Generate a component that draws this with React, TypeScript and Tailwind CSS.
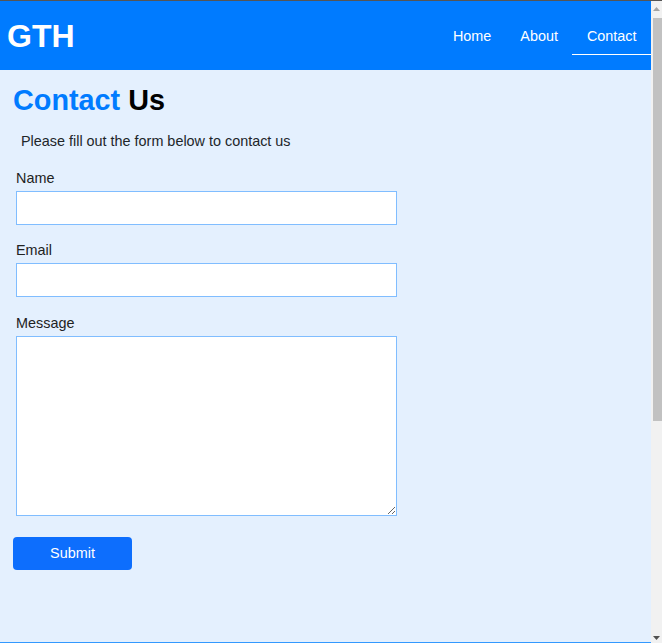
import React from 'react';

const navLinks = [
    { label: 'Home', active: false },
    { label: 'About', active: false },
    { label: 'Contact', active: true },
];

function Header() {
    return (
        <header className="flex h-[69px] items-center justify-between bg-[#007bff]">
            <div className="pl-[7px] text-[32px] font-bold leading-none text-white">GTH</div>
            <nav className="flex self-stretch items-center">
                {navLinks.map((link) => (
                    <a
                        key={link.label}
                        href="#"
                        className={
                            link.active
                                ? 'border-b border-white px-[14.5px] pt-[11px] pb-[9px] text-[14.4px] leading-[17px] text-white'
                                : 'border-b border-transparent px-[14.5px] pt-[11px] pb-[9px] text-[14.4px] leading-[17px] text-white'
                        }
                    >
                        {link.label}
                    </a>
                ))}
            </nav>
        </header>
    );
}

function Field({ label, tall, gap }: { label: string; tall?: boolean; gap: string }) {
    return (
        <div className={`ml-[16px] ${gap}`}>
            <label className="mb-[4px] block text-[14.4px] leading-[17px] text-[#222]">{label}</label>
            {tall ? (
                <textarea className="block h-[180px] w-[381px] border border-[#80bdff] bg-white outline-none" />
            ) : (
                <input type="text" className="block h-[34px] w-[381px] border border-[#80bdff] bg-white outline-none" />
            )}
        </div>
    );
}

// fake browser scrollbar, the page is taller than the window
function Scrollbar() {
    return (
        <div className="flex w-[11px] flex-col bg-[#f1f1f1]">
            <svg className="ml-[2px] mt-[6px]" width="7" height="4" viewBox="0 0 7 4">
                <path d="M0 4 L3.5 0 L7 4 Z" fill="#a3a3a3" />
            </svg>
            <div className="ml-[2px] mt-[7px] h-[403px] w-[9px] bg-[#c1c1c1]" />
            <div className="flex-1" />
            <svg className="mb-[3px] ml-[2px]" width="7" height="4" viewBox="0 0 7 4">
                <path d="M0 0 L7 0 L3.5 4 Z" fill="#505050" />
            </svg>
        </div>
    );
}

export default function App() {
    return (
        <div className="flex h-screen flex-col font-['Liberation_Sans',Arial,sans-serif]">
            <div className="h-px bg-[#555]" />
            <div className="flex min-h-0 flex-1">
                <div className="flex-1 overflow-hidden bg-[#e4f0fe]">
                    <Header />
                    <main className="pb-[72px]">
                        <h1 className="ml-[13px] mt-[14px] text-[28.8px] font-bold leading-[33px]">
                            <span className="text-[#007bff]">Contact</span> <span className="text-black">Us</span>
                        </h1>
                        <p className="ml-[21px] mt-[15.5px] text-[14.4px] leading-[17px] text-[#212529]">
                            Please fill out the form below to contact us
                        </p>
                        <form className="mt-[20.5px]">
                            <Field label="Name" gap="mb-[17px]" />
                            <Field label="Email" gap="mb-[18px]" />
                            <Field label="Message" tall gap="mb-[17px]" />
                            <button
                                type="button"
                                className="ml-[13px] mt-[4px] h-[33px] w-[119px] rounded-[4px] bg-[#0d6efd] text-[14.4px] text-white"
                            >
                                Submit
                            </button>
                        </form>
                    </main>
                    <footer className="h-[344px] border-t border-[#3399ff] bg-[#007bff]" />
                </div>
                <Scrollbar />
            </div>
        </div>
    );
}
